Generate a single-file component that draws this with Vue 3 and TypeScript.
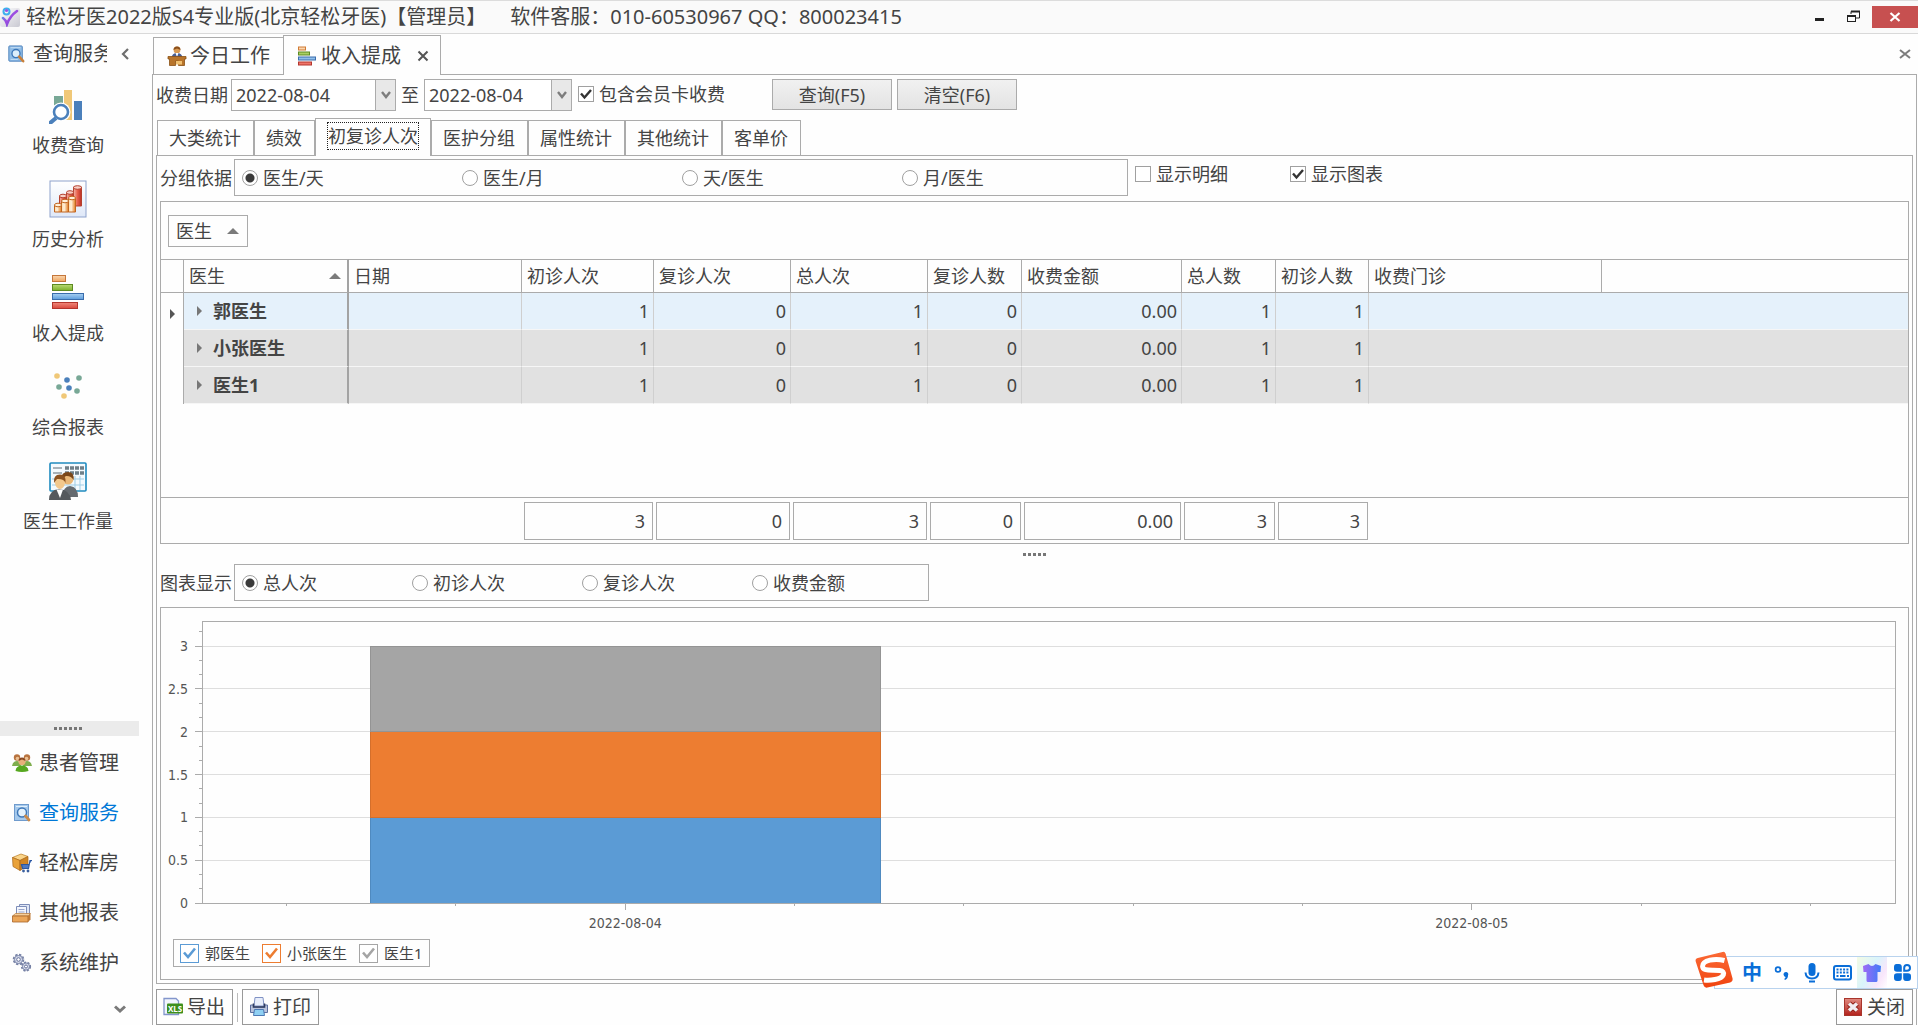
<script setup lang="ts">
import { ref } from 'vue'

interface Column {
  key: string
  title: string
  width: number | null
  numeric?: boolean
}

interface DoctorRow {
  name: string
  values: string[]
}

const columns: Column[] = [
  { key: 'doctor', title: '医生', width: 165 },
  { key: 'date', title: '日期', width: 173 },
  { key: 'firstVisits', title: '初诊人次', width: 132, numeric: true },
  { key: 'returnVisits', title: '复诊人次', width: 137, numeric: true },
  { key: 'totalVisits', title: '总人次', width: 137, numeric: true },
  { key: 'returnPeople', title: '复诊人数', width: 94, numeric: true },
  { key: 'amount', title: '收费金额', width: 160, numeric: true },
  { key: 'totalPeople', title: '总人数', width: 94, numeric: true },
  { key: 'firstPeople', title: '初诊人数', width: 93, numeric: true },
  { key: 'clinic', title: '收费门诊', width: 233 },
]

const rows: DoctorRow[] = [
  { name: '郭医生', values: ['1', '0', '1', '0', '0.00', '1', '1'] },
  { name: '小张医生', values: ['1', '0', '1', '0', '0.00', '1', '1'] },
  { name: '医生1', values: ['1', '0', '1', '0', '0.00', '1', '1'] },
]
const totals = ['3', '0', '3', '0', '0.00', '3', '3']
const selectedRow = ref(0)

const statTabs = ['大类统计', '绩效', '初复诊人次', '医护分组', '属性统计', '其他统计', '客单价']
const activeTab = ref(2)

const groupOptions = ['医生/天', '医生/月', '天/医生', '月/医生']
const groupBy = ref('医生/天')
const chartOptions = ['总人次', '初诊人次', '复诊人次', '收费金额']
const chartBy = ref('总人次')

const dateFrom = ref('2022-08-04')
const dateTo = ref('2022-08-04')
const includeCard = ref(true)
const showDetail = ref(false)
const showChart = ref(true)

// Chart scale: the value axis runs a little past 3
const axisMax = 3.293
const yPos = (v: number) => `${(1 - v / axisMax) * 100}%`
const yMajor = [0, 0.5, 1, 1.5, 2, 2.5, 3]
const yMinor = Array.from({ length: 19 }, (_, i) => (i + 1) / 6).filter((_, i) => (i + 1) % 3 !== 0)
const xMinor = [5, 15, 35, 45, 55, 65, 85, 95]
const xLabels = [
  { at: 25, text: '2022-08-04' },
  { at: 75, text: '2022-08-05' },
]
const series = ref([
  { name: '郭医生', color: '#5b9bd5', edge: '#4f8ac0', base: 0, value: 1, shown: true },
  { name: '小张医生', color: '#ed7d31', edge: '#d56f2b', base: 1, value: 1, shown: true },
  { name: '医生1', color: '#a5a5a5', edge: '#949494', base: 2, value: 1, shown: true },
])
</script>

<template>
  <div class="app">
    <header class="titlebar">
      <svg class="logo" viewBox="0 0 20 20">
        <defs>
          <linearGradient id="lg-tile" x1="0" y1="0" x2="1" y2="1">
            <stop offset="0" stop-color="#ffffff" /><stop offset="1" stop-color="#c9c9d2" />
          </linearGradient>
          <linearGradient id="lg-check" x1="0" y1="0" x2="1" y2="1">
            <stop offset="0" stop-color="#35b6ee" /><stop offset=".5" stop-color="#a04be0" /><stop offset="1" stop-color="#6d4fd8" />
          </linearGradient>
        </defs>
        <rect x="0" y="1" width="20" height="19" rx="2" fill="url(#lg-tile)" />
        <path d="M3 11 Q6 13 7 17 Q10 9 17 4" fill="none" stroke="url(#lg-check)" stroke-width="2.6" stroke-linecap="round" />
        <circle cx="6.500" cy="4.500" r="3" fill="none" stroke="#3db0ee" stroke-width="2" />
        <circle cx="6.500" cy="3.500" r="1.600" fill="#9a55e0" />
      </svg>
      <h1 class="title">轻松牙医2022版S4专业版(北京轻松牙医)【管理员】</h1>
      <span class="title service">软件客服：010-60530967 QQ：800023415</span>
      <div class="window-buttons">
        <button type="button" class="win" aria-label="最小化">
          <svg width="16" height="16" viewBox="0 0 16 16"><rect x="3" y="9" width="9" height="3" fill="#222" /></svg>
        </button>
        <button type="button" class="win" aria-label="还原">
          <svg width="16" height="16" viewBox="0 0 16 16" fill="none" stroke="#222">
            <path d="M5 5V2.500H13.500V9H10" stroke-width="1" /><path d="M5 2.500H14" stroke-width="2" />
            <rect x="1.500" y="7" width="8" height="5.500" /><path d="M1 7H10" stroke-width="2" />
          </svg>
        </button>
        <button type="button" class="win close" aria-label="关闭窗口">
          <svg width="12" height="12" viewBox="0 0 12 12"><path d="M1.500 2L10.500 10M10.500 2L1.500 10" stroke="#fff" stroke-width="2.200" /></svg>
        </button>
      </div>
    </header>

    <div class="body">
      <aside class="sidebar">
        <div class="side-head">
          <svg class="ic18" viewBox="0 0 20 20">
            <rect x="2" y="1" width="15" height="17" rx="1" fill="#8fbce6" stroke="#4a7fba" />
            <path d="M4 3H15M4 16H12" stroke="#c9e1f6" />
            <circle cx="10" cy="9.500" r="4.500" fill="#dceefb" stroke="#3b76b8" stroke-width="1.500" />
            <path d="M13.500 13L18 18" stroke="#c9803a" stroke-width="2.800" stroke-linecap="round" />
          </svg>
          <span class="side-title">查询服务</span>
          <button type="button" class="plain" aria-label="折叠">
            <svg width="10" height="14" viewBox="0 0 10 14"><path d="M8 2L3 7L8 12" fill="none" stroke="#6e6e6e" stroke-width="2.200" /></svg>
          </button>
        </div>

        <nav class="launcher">
          <a href="#">
            <svg viewBox="0 0 38 38">
              <rect x="5" y="10" width="9" height="12" fill="#78a896" />
              <rect x="15" y="4" width="8" height="30" fill="#f0c878" />
              <rect x="25" y="15" width="8" height="19" fill="#4b80bb" />
              <circle cx="12" cy="26" r="9.500" fill="#fff" /><circle cx="12" cy="26" r="7" fill="#fff" stroke="#4b80bb" stroke-width="2.600" />
              <path d="M7 32L0 38" stroke="#4b80bb" stroke-width="4" />
            </svg>
            <span>收费查询</span>
          </a>
          <a href="#">
            <svg viewBox="0 0 38 38">
              <defs>
                <linearGradient id="g-frame" x1="0" y1="0" x2="0" y2="1"><stop offset="0" stop-color="#fff" /><stop offset="1" stop-color="#dfe8f8" /></linearGradient>
                <linearGradient id="g-red"><stop offset="0" stop-color="#f2b4a8" /><stop offset=".5" stop-color="#e8604c" /><stop offset="1" stop-color="#b82f25" /></linearGradient>
                <linearGradient id="g-org"><stop offset="0" stop-color="#fbd9a8" /><stop offset=".4" stop-color="#fff0da" /><stop offset="1" stop-color="#e07a1c" /></linearGradient>
              </defs>
              <rect x="1" y="1" width="36" height="36" fill="url(#g-frame)" stroke="#8ea2cc" />
              <g stroke="#b5402e" fill="url(#g-red)">
                <path d="M24.500 7v19h8V7z" /><ellipse cx="28.500" cy="7.500" rx="4" ry="1.800" fill="#f7cfc6" />
                <path d="M17.500 13v14h7V13z" /><ellipse cx="21" cy="12.500" rx="3.500" ry="1.800" fill="#f7cfc6" />
                <path d="M10.500 16v14h7V16z" /><ellipse cx="14" cy="16" rx="3.500" ry="1.800" fill="#f7cfc6" />
              </g>
              <g stroke="#c2641e" fill="url(#g-org)">
                <path d="M19.500 18v14h7V18z" /><ellipse cx="23" cy="18" rx="3.500" ry="1.800" fill="#fff0da" />
                <path d="M12.500 21v11h7V21z" /><ellipse cx="16" cy="21" rx="3.500" ry="1.800" fill="#fff0da" />
                <path d="M5.500 25v7h7V25z" /><ellipse cx="9" cy="25" rx="3.500" ry="1.800" fill="#fff0da" />
              </g>
            </svg>
            <span>历史分析</span>
          </a>
          <a href="#">
            <svg viewBox="0 0 38 38">
              <defs>
                <linearGradient id="b-o" x1="0" y1="0" x2="0" y2="1"><stop offset="0" stop-color="#fbd6ae" /><stop offset="1" stop-color="#eda560" /></linearGradient>
                <linearGradient id="b-g" x1="0" y1="0" x2="0" y2="1"><stop offset="0" stop-color="#b9da75" /><stop offset="1" stop-color="#7cb02c" /></linearGradient>
                <linearGradient id="b-b" x1="0" y1="0" x2="0" y2="1"><stop offset="0" stop-color="#a9d0f2" /><stop offset="1" stop-color="#5b9bdc" /></linearGradient>
                <linearGradient id="b-r" x1="0" y1="0" x2="0" y2="1"><stop offset="0" stop-color="#f08a7c" /><stop offset="1" stop-color="#d9473c" /></linearGradient>
              </defs>
              <rect x="3.500" y="1.500" width="13" height="6" fill="url(#b-o)" stroke="#c4763a" />
              <rect x="3.500" y="10.500" width="20" height="6" fill="url(#b-g)" stroke="#5d8a22" />
              <rect x="3.500" y="19.500" width="31" height="6" fill="url(#b-b)" stroke="#3a6cab" />
              <rect x="3.500" y="28.500" width="25" height="6" fill="url(#b-r)" stroke="#b3352d" />
            </svg>
            <span>收入提成</span>
          </a>
          <a href="#">
            <svg viewBox="0 0 38 38">
              <circle cx="8" cy="8" r="2.800" fill="#f0c878" /><circle cx="18" cy="12" r="2.800" fill="#4b80bb" />
              <circle cx="30" cy="10" r="2.800" fill="#78a896" /><circle cx="10" cy="19" r="2.800" fill="#78a896" />
              <circle cx="20" cy="20" r="2.800" fill="#4b80bb" /><circle cx="28" cy="23" r="2.800" fill="#78a896" />
              <circle cx="15" cy="28" r="2.800" fill="#f0c878" />
            </svg>
            <span>综合报表</span>
          </a>
          <a href="#">
            <svg viewBox="0 0 38 38">
              <rect x="1" y="1" width="36" height="28" rx="1" fill="#f4fafe" stroke="#1f8abf" stroke-width="1.600" />
              <path d="M4 6H13M4 11H13" stroke="#5a6a74" stroke-width="1.200" />
              <path d="M16 6H35M16 11H35" stroke="#6f7f88" stroke-width="3.600" stroke-dasharray="4 1" />
              <path d="M3 17H35M3 23H35M26 14V28M31 14V28" stroke="#9fcde6" />
              <circle cx="19" cy="17" r="5.500" fill="#eab878" /><path d="M12.500 17Q12 10 19 10Q25.500 10 24.500 18Q22 13.500 17 14Z" fill="#7a4618" />
              <path d="M14 35Q14 24 21 24Q29 25 29 35Z" fill="#666b70" />
              <ellipse cx="11" cy="20.500" rx="5" ry="6.500" fill="#f3c88c" /><path d="M5 21Q4 12.500 11 12.500Q17.500 12.500 16.500 21Q15 16.500 8 17Z" fill="#8c5320" />
              <path d="M0 38Q0 28 10 27Q21 28 22 38Z" fill="#55595d" /><path d="M7.500 27.500L11 36L14 27.500Z" fill="#fff" />
            </svg>
            <span>医生工作量</span>
          </a>
        </nav>

        <div class="side-splitter"><i v-for="n in 6" :key="n"></i></div>

        <nav class="modules">
          <a href="#">
            <svg class="ic20" viewBox="0 0 20 20">
              <circle cx="5" cy="4.500" r="3.200" fill="#b87440" /><circle cx="15" cy="4.500" r="3.200" fill="#b87440" />
              <circle cx="5.500" cy="5.500" r="1.800" fill="#ecc193" /><circle cx="14.500" cy="5.500" r="1.800" fill="#ecc193" />
              <path d="M0 13Q1 8 5 8Q9 8 9 13ZM11 13Q11 8 15 8Q19 8 20 13Z" fill="#7fae4e" />
              <circle cx="10" cy="8.500" r="3.600" fill="#e8b07a" /><path d="M6.500 8Q6.500 4.500 10 4.500Q13.500 4.500 13.500 8L10 6.500Z" fill="#8a4a22" />
              <path d="M3.500 18Q4 12.500 10 12.500Q16 12.500 16.500 18Q10 20 3.500 18Z" fill="#57a820" />
            </svg>
            患者管理
          </a>
          <a href="#" class="current">
            <svg class="ic20" viewBox="0 0 20 20">
              <rect x="2.500" y="1.500" width="14" height="16" fill="#a5c9ec" stroke="#6f9bcd" />
              <path d="M4 3.500H15" stroke="#e2f0fb" />
              <circle cx="10" cy="9.500" r="4.500" fill="#e4f2fc" stroke="#3f78b8" stroke-width="1.500" />
              <path d="M13.500 13L17 17" stroke="#c98a4a" stroke-width="2.800" stroke-linecap="round" />
            </svg>
            查询服务
          </a>
          <a href="#">
            <svg class="ic20" viewBox="0 0 20 20">
              <path d="M0.500 4.500L9 1L16 3.500L8 7.500Z" fill="#fbd58a" stroke="#b87820" stroke-width=".7" />
              <path d="M0.500 4.500L8 7.500V17.500L1 13.500Z" fill="#e9a23a" stroke="#a8661a" stroke-width=".7" />
              <path d="M8 7.500L16 3.500V12.500L8 17.500Z" fill="#d08524" stroke="#a8661a" stroke-width=".7" />
              <path d="M20 7.500H18L16.500 15.500H10.500L9.500 11.500H17" fill="#4b78c2" stroke="#2c57a0" stroke-width="1.200" />
              <circle cx="11.500" cy="18" r="1.400" fill="#3a5f9f" /><circle cx="16" cy="18" r="1.400" fill="#3a5f9f" />
            </svg>
            轻松库房
          </a>
          <a href="#">
            <svg class="ic20" viewBox="0 0 20 20">
              <path d="M7.500 1.500H17.500V11H7.500Z" fill="#dfe6f5" stroke="#7d8db8" /><path d="M4.500 3.500H14.500V13H4.500Z" fill="#f3f6fd" stroke="#7d8db8" />
              <path d="M6.500 6.500H12.500M6.500 9H12.500" stroke="#98a6cc" />
              <path d="M0.500 13L3.500 10.500H18.500L16 13Z" fill="#f6cf9a" stroke="#b97a38" stroke-width=".7" />
              <path d="M0.500 13H16V19H0.500Z" fill="#eba658" stroke="#a8652a" stroke-width=".8" /><path d="M16 13L18.500 10.500V16.500L16 19Z" fill="#c07a34" />
            </svg>
            其他报表
          </a>
          <a href="#">
            <svg class="ic20" viewBox="0 0 20 20">
              <circle cx="6.500" cy="6.500" r="4.600" fill="#c9cfe0" stroke="#7580a4" stroke-width="2.400" stroke-dasharray="2.200 1.400" />
              <circle cx="6.500" cy="6.500" r="4" fill="#d5daea" stroke="#7580a4" stroke-width=".8" /><circle cx="6.500" cy="6.500" r="1.800" fill="#fff" stroke="#66719a" />
              <circle cx="14" cy="13.500" r="4" fill="#c9cfe0" stroke="#7580a4" stroke-width="2.200" stroke-dasharray="2 1.300" />
              <circle cx="14" cy="13.500" r="3.500" fill="#d5daea" stroke="#7580a4" stroke-width=".8" /><circle cx="14" cy="13.500" r="1.500" fill="#fff" stroke="#66719a" />
            </svg>
            系统维护
          </a>
        </nav>
        <button type="button" class="plain more" aria-label="更多">
          <svg width="12" height="10" viewBox="0 0 12 10"><path d="M1 1.500L6 6L11 1.500" fill="none" stroke="#7a7a7a" stroke-width="3" /></svg>
        </button>
      </aside>

      <main class="work">
        <div class="doc-tabs">
          <button type="button" class="doc-tab">
            <svg class="ic20" viewBox="0 0 20 20">
              <circle cx="10" cy="4" r="3.400" fill="#d99a52" /><path d="M6.500 4Q6.500 .5 10 .5Q13.500 .5 13.500 4L10 2.500Z" fill="#8a4f1c" />
              <path d="M4.500 12Q5 7 10 7Q15 7 15.500 12Z" fill="#4a5f92" /><path d="M8.500 7L10 11L11.500 7Z" fill="#fff" />
              <path d="M1 10.500H19V13H17.500V19.500H11.500V15H8.500V19.500H2.500V13H1Z" fill="#b8742a" stroke="#8a5014" stroke-width=".8" />
              <rect x="9" y="15" width="6" height="3.500" fill="#f0c070" />
            </svg>
            今日工作
          </button>
          <button type="button" class="doc-tab active">
            <svg class="ic20" viewBox="0 0 20 20">
              <rect x="1.500" y="1" width="7" height="3" fill="#fbd6ae" stroke="#d07a34" /><rect x="1.500" y="6" width="11" height="3" fill="#a9cf62" stroke="#5d8a22" />
              <rect x="1.500" y="11" width="17" height="3" fill="#8fbfec" stroke="#3a6cab" /><rect x="1.500" y="16" width="13" height="3" fill="#ef7468" stroke="#b3352d" />
            </svg>
            收入提成
            <svg class="tab-x" width="12" height="12" viewBox="0 0 12 12"><path d="M1.500 1.500L10.500 10.500M10.500 1.500L1.500 10.500" stroke="#555" stroke-width="2" /></svg>
          </button>
          <button type="button" class="plain close-doc" aria-label="关闭页签">
            <svg width="12" height="12" viewBox="0 0 12 12"><path d="M1 2L11 10M11 2L1 10" stroke="#7d7d7d" stroke-width="2" /></svg>
          </button>
        </div>

        <div class="page">
          <form class="filters" @submit.prevent>
            <label class="field-label" for="from">收费日期</label>
            <div class="date from">
              <input id="from" v-model="dateFrom" type="text" />
              <button type="button" aria-label="选择开始日期"><svg width="10" height="9" viewBox="0 0 10 9"><path d="M1 1L5 6L9 1" fill="none" stroke="#7d7d7d" stroke-width="2.400" /></svg></button>
            </div>
            <label class="to" for="to">至</label>
            <div class="date until">
              <input id="to" v-model="dateTo" type="text" />
              <button type="button" aria-label="选择结束日期"><svg width="10" height="9" viewBox="0 0 10 9"><path d="M1 1L5 6L9 1" fill="none" stroke="#7d7d7d" stroke-width="2.400" /></svg></button>
            </div>
            <label class="check card"><input v-model="includeCard" type="checkbox" />包含会员卡收费</label>
            <button type="submit" class="push">查询(F5)</button>
            <button type="reset" class="push">清空(F6)</button>
          </form>

          <div class="stat-tabs">
            <button
              v-for="(t, i) in statTabs" :key="t" type="button" class="stat-tab"
              :class="{ active: i === activeTab }" @click="activeTab = i"
            ><span>{{ t }}</span></button>
          </div>

          <section class="stat-page">
            <div class="option-row">
              <span id="group-label" class="field-label">分组依据</span>
              <div class="radios group" role="radiogroup" aria-labelledby="group-label">
                <label v-for="o in groupOptions" :key="o"><input v-model="groupBy" type="radio" name="group" :value="o" />{{ o }}</label>
              </div>
              <label class="check detail"><input v-model="showDetail" type="checkbox" />显示明细</label>
              <label class="check"><input v-model="showChart" type="checkbox" />显示图表</label>
            </div>

            <div class="grid">
              <div class="group-bar">
                <button type="button" class="chip">医生<i class="up"></i></button>
              </div>
              <table class="data">
                <colgroup>
                  <col class="mark-col" />
                  <col v-for="c in columns" :key="c.key" :style="{ width: c.width + 'px' }" />
                  <col />
                </colgroup>
                <thead>
                  <tr>
                    <th></th>
                    <th v-for="(c, i) in columns" :key="c.key" :class="{ fixed: i === 0 }">
                      <div class="head-cell">{{ c.title }}<i v-if="i === 0" class="up"></i></div>
                    </th>
                    <th class="rest"></th>
                  </tr>
                </thead>
                <tbody>
                  <tr v-for="(r, i) in rows" :key="r.name" :class="{ selected: i === selectedRow }" @click="selectedRow = i">
                    <td class="mark"><i v-if="i === selectedRow" class="right dark"></i></td>
                    <td class="fixed"><div class="name"><i class="right"></i>{{ r.name }}</div></td>
                    <td></td>
                    <td v-for="(v, j) in r.values" :key="j" class="num">{{ v }}</td>
                    <td colspan="2" class="rest"></td>
                  </tr>
                </tbody>
              </table>
              <div class="grid-space"></div>
              <table class="totals">
                <colgroup>
                  <col class="mark-col" />
                  <col v-for="c in columns" :key="c.key" :style="{ width: c.width + 'px' }" />
                  <col />
                </colgroup>
                <tbody>
                  <tr>
                    <td colspan="3"></td>
                    <td v-for="(v, j) in totals" :key="j"><div class="sum">{{ v }}</div></td>
                    <td colspan="2"></td>
                  </tr>
                </tbody>
              </table>
            </div>

            <div class="splitter"><i v-for="n in 5" :key="n"></i></div>

            <div class="option-row">
              <span id="chart-label" class="field-label">图表显示</span>
              <div class="radios chart-by" role="radiogroup" aria-labelledby="chart-label">
                <label v-for="o in chartOptions" :key="o"><input v-model="chartBy" type="radio" name="chart" :value="o" />{{ o }}</label>
              </div>
            </div>

            <div class="chart">
              <svg class="plot">
                <g class="gridlines">
                  <line v-for="v in yMajor" :key="v" x1="0" x2="100%" :y1="yPos(v)" :y2="yPos(v)" />
                </g>
                <template v-for="s in series" :key="s.name">
                  <rect
                    v-if="s.shown" x="9.95%" width="30.1%" :y="yPos(s.base + s.value)"
                    :height="(s.value / axisMax) * 100 + '%'" :fill="s.color" :stroke="s.edge"
                  />
                </template>
                <rect class="frame" x="0" y="0" width="100%" height="100%" />
                <g class="ticks">
                  <line v-for="v in yMajor" :key="'a' + v" x1="-7" x2="0" :y1="yPos(v)" :y2="yPos(v)" />
                  <line v-for="v in yMinor" :key="'b' + v" x1="-3" x2="0" :y1="yPos(v)" :y2="yPos(v)" />
                  <svg x="0" y="100%" class="below">
                    <line v-for="x in xMinor" :key="x" :x1="x + '%'" :x2="x + '%'" y1="0" y2="3" />
                    <line v-for="x in xLabels" :key="x.at" :x1="x.at + '%'" :x2="x.at + '%'" y1="0" y2="7" />
                  </svg>
                </g>
                <text v-for="v in yMajor" :key="'t' + v" x="-14" :y="yPos(v)" dy="5" text-anchor="end">{{ v }}</text>
                <text v-for="x in xLabels" :key="x.text" :x="x.at + '%'" y="100%" dy="25" text-anchor="middle">{{ x.text }}</text>
              </svg>
              <div class="legend">
                <label v-for="s in series" :key="s.name" :style="{ '--tint': s.color }">
                  <span class="swatch">
                    <input v-model="s.shown" type="checkbox" />
                    <svg v-if="s.shown" width="13" height="13" viewBox="0 0 13 13"><path d="M1 5.500L5 10L12 1.500" fill="none" :stroke="s.color" stroke-width="2.600" /></svg>
                  </span>
                  {{ s.name }}
                </label>
              </div>
            </div>
          </section>

          <footer class="tools">
            <button type="button" class="tool">
              <svg class="ic20" viewBox="0 0 20 20">
                <path d="M1 1.500H13L15.500 4V17.500H1Z" fill="#f1f5fd" stroke="#8396cc" stroke-width="1.300" />
                <rect x="4" y="6.500" width="16" height="10" rx="1" fill="#3d8f1c" />
                <text x="12" y="14.500" class="xls">XLS</text>
              </svg>
              导出
            </button>
            <i class="bar"></i>
            <button type="button" class="tool">
              <svg class="ic20" viewBox="0 0 20 20">
                <path d="M6 .5H14L15 9H5Z" fill="#e8eefb" stroke="#8092c4" />
                <path d="M1.500 8H4.500V10H15.500V8H18.500V15.500H1.500Z" fill="#b9c3dc" stroke="#5d6f9f" />
                <path d="M4.500 6.500V10H15.500V6.500" fill="none" stroke="#2f3c60" stroke-width="1.600" />
                <path d="M5.500 12.500H14.500L15.500 18.500H4.500Z" fill="#8fd0f3" stroke="#4d7ab5" />
              </svg>
              打印
            </button>
            <button type="button" class="tool quit">
              <svg class="ic20" viewBox="0 0 20 20">
                <defs><linearGradient id="q" x1="0" y1="0" x2="0" y2="1"><stop offset="0" stop-color="#e08a80" /><stop offset="1" stop-color="#b3221c" /></linearGradient></defs>
                <rect x="1.500" y="1.500" width="17" height="17" fill="url(#q)" stroke="#a8352c" />
                <path d="M6 6.500L14 13.500M14 6.500L6 13.500" stroke="#8f2018" stroke-width="5.500" /><path d="M6 6.500L14 13.500M14 6.500L6 13.500" stroke="#f2eef2" stroke-width="3.600" />
              </svg>
              关闭
            </button>
          </footer>
        </div>
      </main>
    </div>

    <div class="ime">
      <svg class="ime-logo" viewBox="0 0 42 42">
        <defs><linearGradient id="sg" x1="0" y1="0" x2="0" y2="1"><stop offset="0" stop-color="#fb6a36" /><stop offset="1" stop-color="#f04410" /></linearGradient></defs>
        <path d="M4 8.500L30 2Q32.500 1.500 33.200 4L40.500 30Q41 33 38 34L14 39.500Q11 40 10 37L1.800 12Q1 9.300 4 8.500Z" fill="url(#sg)" />
        <path d="M32 11C22 8.500 9 10.500 9 17C9 23 19 20.500 27 21.500C34 22.500 32 29 22 31C18 31.800 14 32 10.500 31.500" fill="none" stroke="#fff" stroke-width="5.200" />
      </svg>
      <button type="button" class="zh">中</button>
      <button type="button" aria-label="标点">
        <svg width="16" height="20" viewBox="0 0 16 20"><circle cx="4" cy="6.500" r="2.400" fill="none" stroke="#0a6ed8" stroke-width="1.700" /><path d="M9.500 11.500A2.400 2.400 0 1 1 14 12.500Q14 15.500 11 17L10.200 16Q11.500 15 11.600 14Q9.800 13.500 9.500 11.500Z" fill="#0a6ed8" /></svg>
      </button>
      <button type="button" aria-label="语音">
        <svg width="16" height="20" viewBox="0 0 16 20"><rect x="4.500" y="0" width="7" height="13" rx="3.500" fill="#0a6ed8" /><path d="M1.500 9.500Q2 15.500 8 15.500Q14 15.500 14.500 9.500" fill="none" stroke="#0a6ed8" stroke-width="2" /><path d="M5 18.500H11" stroke="#0a6ed8" stroke-width="2" /></svg>
      </button>
      <button type="button" aria-label="键盘">
        <svg width="19" height="16" viewBox="0 0 19 16"><rect x="1" y="1" width="17" height="13.500" rx="2" fill="none" stroke="#0a6ed8" stroke-width="2" /><path d="M3.500 4.500H16M3.500 7.500H16" stroke="#0a6ed8" stroke-width="2" stroke-dasharray="2 1.300" /><path d="M3.500 11H5.500M7 11H12.500M14 11H16" stroke="#0a6ed8" stroke-width="2" /></svg>
      </button>
      <button type="button" aria-label="皮肤" class="skin">
        <svg width="20" height="20" viewBox="0 0 20 20"><defs><linearGradient id="sk"><stop offset="0" stop-color="#a06af5" /><stop offset="1" stop-color="#3f7cf8" /></linearGradient></defs><path d="M1 3L6.500 1Q10 5 13.500 1L19 3L18.500 9H15.500V17.500Q15.500 19 14 19H6Q4.500 19 4.500 17.500V9H1.500Z" fill="url(#sk)" /></svg>
      </button>
      <button type="button" aria-label="工具箱">
        <svg width="17" height="17" viewBox="0 0 17 17" fill="#0a6ed8"><path d="M2.500 0H5Q7.800 0 7.800 3V7.800H3Q0 7.800 0 5V3Q0 0 2.500 0ZM0 12Q0 9.200 3 9.200H7.800V14Q7.800 17 5 17H3Q0 17 0 14ZM9.200 9.200H14Q17 9.200 17 12V14Q17 17 14 17H12Q9.200 17 9.200 14Z" /><path d="M10.200 6.800V4Q10.200 1 13 1Q16 1 16 4Q16 6.800 13 6.800Z" fill="none" stroke="#0a6ed8" stroke-width="2" /></svg>
      </button>
    </div>
  </div>
</template>

<style>
body {
  margin: 0;
  background: #fff;
}
</style>

<style scoped>
.app {
  position: relative;
  display: flex;
  flex-direction: column;
  min-height: 100vh;
  box-sizing: border-box;
  background: #fefefe;
  color: #444;
  font-family: 'Noto Sans', 'Noto Sans CJK SC', sans-serif;
  font-size: 18px;
  line-height: 24px;
}
.app *,
.app *::before {
  box-sizing: border-box;
}
button,
input {
  font: inherit;
  color: inherit;
  margin: 0;
}
button {
  padding: 0;
  background: none;
  border: 0;
}
a {
  color: inherit;
  text-decoration: none;
}
svg {
  display: block;
  flex: none;
}
.ic18 {
  width: 18px;
  height: 18px;
}
.ic20 {
  width: 20px;
  height: 20px;
}

/* title bar */
.titlebar {
  display: flex;
  align-items: center;
  height: 34px;
  background: #fafafa;
  border-top: 1px solid #dcdcdc;
  border-bottom: 1px solid #d9d9d9;
}
.logo {
  width: 20px;
  height: 20px;
  margin-right: 6px;
}
.title {
  margin: 0;
  font-size: 20px;
  font-weight: 400;
  white-space: nowrap;
}
.service {
  margin-left: 24px;
}
.window-buttons {
  display: flex;
  margin-left: auto;
  gap: 18px;
}
.win {
  display: grid;
  place-items: center;
  width: 16px;
  height: 22px;
}
.win.close {
  width: 46px;
  margin-left: -8px;
  background: #c75050;
}

.body {
  display: flex;
  flex: 1;
}

/* sidebar */
.sidebar {
  display: flex;
  flex-direction: column;
  flex: none;
  width: 152px;
}
.side-head {
  display: flex;
  align-items: center;
  height: 40px;
  padding-left: 7px;
}
.side-title {
  width: 74px;
  margin: 0 13px 0 8px;
  overflow: hidden;
  font-size: 20px;
  white-space: nowrap;
}
.launcher {
  display: flex;
  flex-direction: column;
  gap: 23px;
  width: 136px;
  margin-top: 12px;
}
.launcher a {
  display: flex;
  flex-direction: column;
  align-items: center;
  gap: 9px;
}
.launcher svg {
  width: 38px;
  height: 38px;
}
.side-splitter {
  display: flex;
  align-items: center;
  justify-content: center;
  gap: 2px;
  width: 139px;
  height: 15px;
  margin-top: auto;
  padding-right: 3px;
  background: #ebebeb;
}
.side-splitter i,
.splitter i {
  width: 3px;
  height: 3px;
  background: #777;
}
.modules {
  padding-top: 2px;
  font-size: 20px;
}
.modules a {
  display: flex;
  align-items: center;
  gap: 7px;
  height: 50px;
  padding-left: 12px;
}
.modules .current {
  color: #0078d7;
}
.more {
  display: flex;
  justify-content: center;
  align-items: center;
  width: 24px;
  height: 37px;
  margin-left: 108px;
  padding-top: 6px;
}

/* document tabs */
.work {
  display: flex;
  flex-direction: column;
  flex: 1;
  min-width: 0;
  margin-right: 1px;
}
.doc-tabs {
  display: flex;
  align-items: flex-end;
  height: 40px;
  padding-left: 1px;
  font-size: 20px;
}
.doc-tab {
  display: flex;
  align-items: center;
  gap: 3px;
  width: 131px;
  height: 37px;
  padding-left: 13px;
  border: 1px solid #ababab;
  border-bottom: 0;
}
.doc-tab.active {
  z-index: 1;
  gap: 4px;
  width: 158px;
  height: 40px;
  margin: 0 0 -1px -1px;
  padding-left: 13px;
  background: #fefefe;
}
.tab-x {
  margin-left: 12px;
}
.close-doc {
  align-self: center;
  margin: 0 6px 0 auto;
}

.page {
  display: flex;
  flex-direction: column;
  flex: 1;
  padding: 0 3px;
  border: 1px solid #ababab;
  border-bottom: 0;
}
.filters {
  display: flex;
  align-items: flex-start;
  padding-top: 4px;
  height: 43px;
  line-height: 32px;
}
.field-label {
  flex: none;
  width: 75px;
  white-space: nowrap;
}
.date {
  display: flex;
  height: 32px;
  border: 1px solid #ababab;
}
.date.from {
  width: 165px;
}
.date.until {
  width: 148px;
}
.date input {
  flex: 1;
  min-width: 0;
  padding: 0 0 0 4px;
  border: 0;
  outline: 0;
  background: #fff;
}
.date button {
  display: grid;
  place-items: center;
  width: 20px;
  background: #e8e8e8;
  border-left: 1px solid #ababab;
}
.to {
  padding: 0 5px;
}
.check {
  display: flex;
  align-items: center;
  height: 30px;
  white-space: nowrap;
}
.check input {
  appearance: none;
  width: 16px;
  height: 16px;
  margin-right: 5px;
  border: 1px solid #a0a0a0;
  background: #fff;
}
.check input:checked {
  background: #fff
    url("data:image/svg+xml,%3Csvg xmlns='http://www.w3.org/2000/svg' viewBox='0 0 14 14'%3E%3Cpath d='M2 6.500L5.500 10.500L12 3' fill='none' stroke='%23333' stroke-width='2.400'/%3E%3C/svg%3E")
    center / 14px 14px no-repeat;
}
.check.card {
  width: 194px;
  margin-left: 6px;
}
.push {
  width: 120px;
  height: 31px;
  margin-right: 5px;
  line-height: 28px;
  border: 1px solid #ababab;
  background: linear-gradient(#f1f1f1, #e3e3e3);
}

/* statistics tabs */
.stat-tabs {
  display: flex;
  align-items: flex-end;
  height: 37px;
  padding-left: 1px;
}
.stat-tab {
  height: 35px;
  margin-right: -1px;
  padding: 0 12px 0 11px;
  border: 1px solid #ababab;
  border-bottom: 0;
  white-space: nowrap;
}
.stat-tab + .stat-tab {
  margin-left: 1px;
}
.stat-tab.active {
  z-index: 1;
  height: 38px;
  margin-bottom: -1px;
  padding: 0 11px 4px;
  background: #fefefe;
}
.stat-tab.active span {
  display: block;
  line-height: 26px;
  border: 1px dotted #222;
}
.stat-page {
  display: flex;
  flex-direction: column;
  flex: 1;
  padding: 3px;
  border: 1px solid #ababab;
}
.option-row {
  display: flex;
  align-items: center;
  height: 37px;
}
.option-row .field-label {
  width: 74px;
  line-height: 36px;
}
.option-row .check {
  align-self: flex-start;
}
.radios {
  display: flex;
  align-items: center;
  height: 37px;
  margin-right: 7px;
  padding-left: 7px;
  border: 1px solid #ababab;
}
.radios.group {
  width: 894px;
}
.radios.chart-by {
  width: 695px;
}
.radios label {
  display: flex;
  align-items: center;
  width: 220px;
  white-space: nowrap;
}
.chart-by label {
  width: 170px;
}
.radios input {
  appearance: none;
  width: 16px;
  height: 16px;
  margin-right: 5px;
  border: 1px solid #a0a0a0;
  border-radius: 50%;
  background: #fff;
}
.radios input:checked {
  background: radial-gradient(circle, #3a3a3a 4px, #fff 5px);
}
.check.detail {
  width: 155px;
}

/* result grid */
.grid {
  display: flex;
  flex-direction: column;
  margin-top: 5px;
  border: 1px solid #ababab;
}
.group-bar {
  padding: 13px 7px 12px;
}
.chip {
  display: flex;
  align-items: center;
  justify-content: space-between;
  width: 80px;
  height: 32px;
  padding: 0 8px 0 7px;
  border: 1px solid #ababab;
}
.up {
  border: 6px solid transparent;
  border-top: 0;
  border-bottom-color: #7b7b7b;
}
.right {
  display: inline-block;
  width: 0;
  height: 0;
  border: 5px solid transparent;
  border-right: 0;
  border-left-color: #777;
}
.right.dark {
  border-left-color: #555;
  vertical-align: middle;
}
.data,
.totals {
  width: 100%;
  table-layout: fixed;
  border-collapse: separate;
  border-spacing: 0;
}
.mark-col {
  width: 23px;
}
th,
td {
  padding: 0;
}
th {
  height: 34px;
  font-weight: 400;
  text-align: left;
  border: 1px solid #ababab;
  border-left: 0;
}
th.rest {
  border-right: 0;
}
th.fixed,
td.fixed {
  border-right: 2px solid #a3a3a3;
}
.head-cell {
  display: flex;
  align-items: center;
  justify-content: space-between;
  padding: 0 6px 0 5px;
}
.data td {
  height: 37px;
  background: #e1e1e1;
  border-right: 1px solid #cfcfcf;
  border-bottom: 1px solid #f6f6f6;
}
.data .selected td {
  background: #e5f1fb;
}
.data td.fixed {
  border-right: 2px solid #a3a3a3;
}
.data td.mark,
.data .selected td.mark {
  background: none;
  border-right-color: #ababab;
  border-bottom: 0;
  text-align: center;
}
.data td.rest {
  border-right: 0;
}
.name {
  display: flex;
  align-items: center;
  gap: 11px;
  padding-left: 13px;
  font-weight: 700;
}
.data td.num {
  padding-right: 4px;
  text-align: right;
}
.grid-space {
  height: 93px;
}
.totals {
  border-top: 1px solid #ababab;
}
.totals td {
  height: 45px;
  padding: 0 1px 0 2px;
}
.sum {
  height: 38px;
  padding-right: 7px;
  line-height: 36px;
  text-align: right;
  border: 1px solid #ababab;
}
.splitter {
  display: flex;
  align-items: center;
  justify-content: center;
  gap: 2px;
  height: 20px;
}

/* chart */
.chart {
  display: flex;
  flex-direction: column;
  flex: 1;
  margin-top: 6px;
  padding: 13px 13px 12px 12px;
  border: 1px solid #ababab;
}
.plot {
  flex: 1 1 240px;
  width: calc(100% - 29px);
  min-height: 240px;
  margin: 0 0 36px 29px;
  overflow: visible;
  shape-rendering: crispEdges;
}
.plot text {
  font-family: 'DejaVu Sans Condensed', 'Noto Sans', sans-serif;
  font-size: 14px;
  fill: #555;
}
.below {
  display: inline;
  width: 100%;
  overflow: visible;
}
.gridlines {
  stroke: #dedede;
}
.frame {
  fill: none;
  stroke: #ababab;
}
.ticks {
  stroke: #ababab;
}
.legend {
  display: flex;
  align-items: center;
  align-self: flex-start;
  gap: 12px;
  height: 28px;
  padding: 0 6px;
  border: 1px solid #ababab;
  font-size: 15px;
}
.legend label {
  display: flex;
  align-items: center;
  gap: 6px;
}
.swatch {
  display: grid;
  place-items: center;
}
.swatch > * {
  grid-area: 1 / 1;
}
.swatch input {
  appearance: none;
  width: 19px;
  height: 19px;
  border: 1px solid var(--tint);
  background: #fff;
}
.swatch svg {
  z-index: 1;
  pointer-events: none;
}

/* bottom tools */
.tools {
  display: flex;
  align-items: center;
  height: 41px;
  padding-top: 5px;
  font-size: 19px;
}
.tool {
  display: flex;
  align-items: center;
  gap: 4px;
  width: 77px;
  height: 36px;
  padding-left: 6px;
  border: 1px solid #999;
}
.tools .bar {
  width: 1px;
  height: 29px;
  margin: 0 4px;
  background: #bbb;
}
.quit {
  margin-left: auto;
}

/* floating input method bar */
.ime {
  position: absolute;
  right: 0;
  bottom: 36px;
  z-index: 2;
  display: flex;
  align-items: center;
  height: 33px;
  padding-left: 22px;
  background: #fff;
  border: 1px solid #b9d3ee;
}
.ime-logo {
  position: absolute;
  left: -21px;
  top: -7px;
  width: 40px;
  height: 40px;
}
.ime button {
  display: grid;
  place-items: center;
  width: 30px;
  height: 31px;
}
.ime .zh {
  color: #0a6ed8;
  font-size: 20px;
  font-weight: 700;
}
.ime .skin {
  background: linear-gradient(120deg, #f4fbe4, #d9f4fb 45%, #f9e6fb 75%, #fff);
}
.xls {
  font-size: 8px;
  font-weight: 700;
  fill: #fff;
  text-anchor: middle;
}
</style>
